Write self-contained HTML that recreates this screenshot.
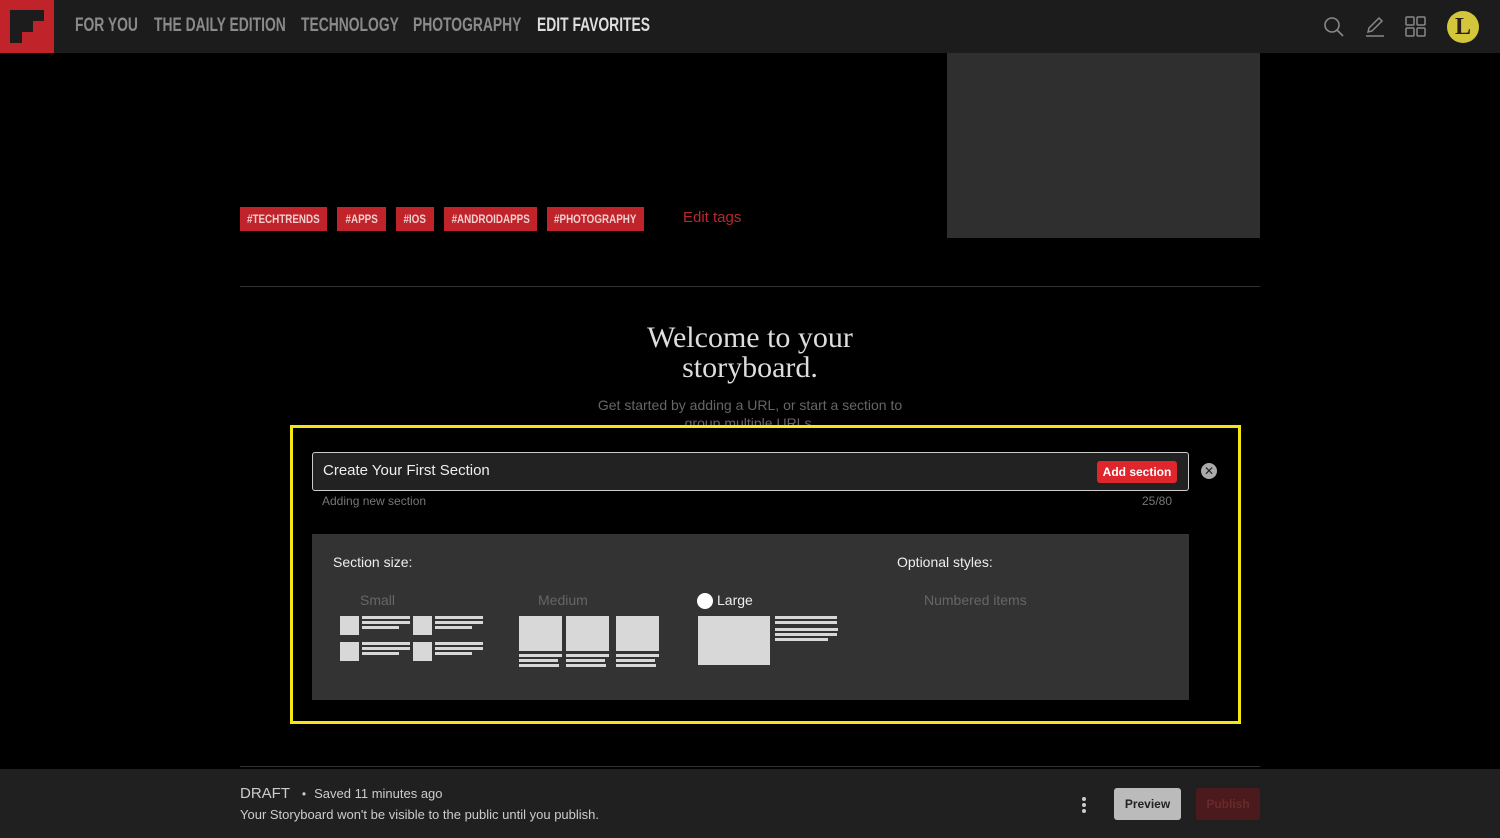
<!DOCTYPE html>
<html><head><meta charset="utf-8"><style>
*{margin:0;padding:0;box-sizing:border-box}
body{width:1500px;height:838px;background:#000;font-family:"Liberation Sans",sans-serif;position:relative;overflow:hidden;color:#fff}
.a{position:absolute}
.nav{left:0;top:0;width:1500px;height:53px;background:#1c1c1c}
.navt{top:15px;font-size:19px;font-weight:bold;color:#8a8a8a;transform:scaleX(.73);transform-origin:left;white-space:nowrap}
.tag{top:207px;height:24px;background:#c0232a;color:#f0d0d0;font-size:12px;font-weight:bold;line-height:24px;text-align:center;white-space:nowrap;display:flex;justify-content:center}
.tag span{display:inline-block;transform:scaleX(.82);transform-origin:center}
</style></head><body>
<div class="a nav"></div>
<div class="a" style="left:0;top:0;width:54px;height:53px;background:#c0232a"></div>
<div class="a" style="left:10px;top:10px;width:34px;height:11px;background:#1c1c1c"></div>
<div class="a" style="left:10px;top:10px;width:12px;height:33px;background:#1c1c1c"></div>
<div class="a" style="left:10px;top:21px;width:23px;height:11px;background:#1c1c1c"></div>
<div class="a navt" style="left:75px">FOR YOU</div>
<div class="a navt" style="left:154px">THE DAILY EDITION</div>
<div class="a navt" style="left:301px">TECHNOLOGY</div>
<div class="a navt" style="left:413px">PHOTOGRAPHY</div>
<div class="a navt" style="left:537px;color:#ddd">EDIT FAVORITES</div>
<svg class="a" style="left:1320px;top:14px" width="30" height="26" fill="none" stroke="#888" stroke-width="1.6"><circle cx="12" cy="11" r="7"/><path d="M17 16l6 6"/></svg>
<svg class="a" style="left:1363px;top:14px" width="24" height="24" fill="none" stroke="#888" stroke-width="1.5"><path d="M5 18l1-4L16 4l3 3L9 17z M3 22h18"/></svg>
<svg class="a" style="left:1405px;top:16px" width="22" height="22" fill="none" stroke="#888" stroke-width="1.5"><rect x="1" y="1" width="8" height="8" rx="1"/><rect x="12" y="1" width="8" height="8" rx="1"/><rect x="1" y="12" width="8" height="8" rx="1"/><rect x="12" y="12" width="8" height="8" rx="1"/></svg>
<div class="a" style="left:1447px;top:11px;width:32px;height:32px;border-radius:50%;background:#d4c63a;color:#2a1f1a;font-family:'Liberation Serif',serif;font-weight:bold;font-size:24px;text-align:center;line-height:32px">L</div>

<div class="a" style="left:947px;top:53px;width:313px;height:185px;background:#2f2f2f"></div>
<div class="a tag" style="left:240px;width:87px"><span>#TECHTRENDS</span></div>
<div class="a tag" style="left:337px;width:49px"><span>#APPS</span></div>
<div class="a tag" style="left:396px;width:38px"><span>#IOS</span></div>
<div class="a tag" style="left:444px;width:93px"><span>#ANDROIDAPPS</span></div>
<div class="a tag" style="left:547px;width:97px"><span>#PHOTOGRAPHY</span></div>
<div class="a" style="left:683px;top:209px;font-size:15px;color:#b8292f">Edit tags</div>
<div class="a" style="left:240px;top:286px;width:1020px;height:1px;background:#333"></div>
<div class="a" style="left:550px;top:323px;width:400px;text-align:center;font-family:'Liberation Serif',serif;font-size:30px;line-height:30px;color:#ddd">Welcome to your<br>storyboard.</div>
<div class="a" style="left:585px;top:396px;width:330px;text-align:center;font-size:14px;line-height:18px;color:#666">Get started by adding a URL, or start a section to group multiple URLs.</div>

<div class="a" style="left:290px;top:425px;width:951px;height:299px;border:3px solid #f5e614;background:#000"></div>
<div class="a" style="left:312px;top:452px;width:877px;height:39px;border:1px solid #ccc;border-radius:3px;background:#222"></div>
<div class="a" style="left:323px;top:462px;font-size:15px;color:#eee">Create Your First Section</div>
<div class="a" style="left:1097px;top:461px;width:80px;height:22px;background:#e0262d;border-radius:3px;font-size:12px;font-weight:bold;line-height:22px;text-align:center">Add section</div>
<div class="a" style="left:1201px;top:463px;width:16px;height:16px;border-radius:50%;background:#aaa;color:#222;font-size:12px;line-height:16px;text-align:center">✕</div>
<div class="a" style="left:322px;top:494px;font-size:12px;color:#777">Adding new section</div>
<div class="a" style="left:1142px;top:494px;font-size:12px;color:#777">25/80</div>
<div class="a" style="left:312px;top:534px;width:877px;height:166px;background:#333"></div>
<div class="a" style="left:333px;top:554px;font-size:14px;color:#eee">Section size:</div>
<div class="a" style="left:897px;top:554px;font-size:14px;color:#eee">Optional styles:</div>
<div class="a" style="left:360px;top:592px;font-size:14px;color:#666">Small</div>
<div class="a" style="left:538px;top:592px;font-size:14px;color:#666">Medium</div>
<div class="a" style="left:697px;top:593px;width:16px;height:16px;border-radius:50%;background:#fff"></div>
<div class="a" style="left:717px;top:592px;font-size:14px;color:#eee">Large</div>
<div class="a" style="left:924px;top:592px;font-size:14px;color:#666">Numbered items</div>
<svg class="a" style="left:0;top:0" width="1500" height="838" fill="#d8d8d8">
<g id="s"><rect x="340" y="616" width="19" height="19"/><rect x="362" y="616" width="48" height="3"/><rect x="362" y="621" width="48" height="3"/><rect x="362" y="626" width="37" height="3"/></g>
<use href="#s" x="73"/><use href="#s" y="26"/><use href="#s" x="73" y="26"/>
<g id="m"><rect x="519" y="616" width="43" height="35"/><rect x="519" y="654" width="43" height="3"/><rect x="519" y="659" width="39" height="3"/><rect x="519" y="664" width="40" height="3"/></g>
<use href="#m" x="47"/><use href="#m" x="97"/>
<rect x="698" y="616" width="72" height="49"/>
<rect x="775" y="616" width="62" height="3"/><rect x="775" y="621" width="62" height="3"/><rect x="775" y="628" width="63" height="3"/><rect x="775" y="633" width="62" height="3"/><rect x="775" y="638" width="53" height="3"/>
</svg>
<div class="a" style="left:240px;top:766px;width:1020px;height:1px;background:#333"></div>
<div class="a" style="left:0;top:769px;width:1500px;height:69px;background:#202020"></div>
<div class="a" style="left:240px;top:785px;font-size:15px;color:#ccc">DRAFT <span style="font-size:12px;margin:0 8px">•</span><span style="font-size:13px">Saved 11 minutes ago</span></div>
<div class="a" style="left:240px;top:807px;font-size:13px;color:#ccc">Your Storyboard won't be visible to the public until you publish.</div>
<div class="a" style="left:1082px;top:797px;width:4px;height:4px;border-radius:50%;background:#ccc;box-shadow:0 6px #ccc,0 12px #ccc"></div>
<div class="a" style="left:1114px;top:788px;width:67px;height:32px;background:#bbb;border-radius:3px;color:#222;font-size:12px;font-weight:bold;line-height:32px;text-align:center">Preview</div>
<div class="a" style="left:1196px;top:788px;width:64px;height:32px;background:#4a1a1c;border-radius:3px;color:#6a2a2c;font-size:12px;font-weight:bold;line-height:32px;text-align:center">Publish</div>
</body></html>
